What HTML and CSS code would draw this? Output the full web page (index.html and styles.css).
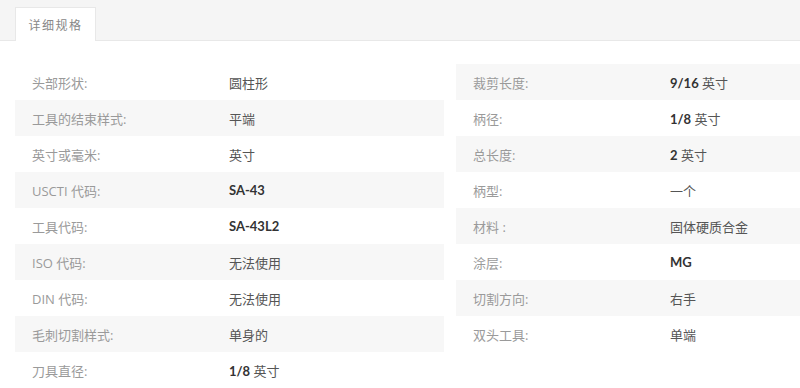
FILE: index.html
```html
<!DOCTYPE html>
<html lang="zh">
<head>
<meta charset="utf-8">
<link rel="stylesheet" href="styles.css">
</head>
<body>
<div class="tabs">
  <div class="tab">详细规格</div>
</div>
<div class="specs">
  <div class="col col-left">
    <div class="row"><span class="label">头部形状:</span><span class="value">圆柱形</span></div>
    <div class="row"><span class="label">工具的结束样式:</span><span class="value">平端</span></div>
    <div class="row"><span class="label">英寸或毫米:</span><span class="value">英寸</span></div>
    <div class="row"><span class="label">USCTI 代码:</span><span class="value"><b class="num">SA-43</b></span></div>
    <div class="row"><span class="label">工具代码:</span><span class="value"><b class="num">SA-43L2</b></span></div>
    <div class="row"><span class="label">ISO 代码:</span><span class="value">无法使用</span></div>
    <div class="row"><span class="label">DIN 代码:</span><span class="value">无法使用</span></div>
    <div class="row"><span class="label">毛刺切割样式:</span><span class="value">单身的</span></div>
    <div class="row"><span class="label">刀具直径:</span><span class="value"><b class="num">1/8</b> 英寸</span></div>
  </div>
  <div class="col col-right">
    <div class="row"><span class="label">裁剪长度:</span><span class="value"><b class="num">9/16</b> 英寸</span></div>
    <div class="row"><span class="label">柄径:</span><span class="value"><b class="num">1/8</b> 英寸</span></div>
    <div class="row"><span class="label">总长度:</span><span class="value"><b class="num">2</b> 英寸</span></div>
    <div class="row"><span class="label">柄型:</span><span class="value">一个</span></div>
    <div class="row"><span class="label">材料 :</span><span class="value">固体硬质合金</span></div>
    <div class="row"><span class="label">涂层:</span><span class="value"><b class="num">MG</b></span></div>
    <div class="row"><span class="label">切割方向:</span><span class="value">右手</span></div>
    <div class="row"><span class="label">双头工具:</span><span class="value">单端</span></div>
  </div>
</div>
</body>
</html>
```
FILE: styles.css
```css
html, body {
  margin: 0;
  padding: 0;
  background: #fff;
  font-family: "Open Sans", "Noto Sans CJK SC", sans-serif;
  font-size: 13px;
}
.tabs {
  display: flex;
  height: 33px;
  padding: 7px 15px 0;
  background: #f5f5f5;
  border-bottom: 1px solid #e8e8e8;
}
.tab {
  width: 79px;
  height: 33px;
  margin-bottom: -1px;
  background: #fff;
  border: 1px solid #e8e8e8;
  border-bottom: none;
  display: flex;
  align-items: center;
  justify-content: center;
  color: #888;
  font-size: 12px;
  letter-spacing: 1.5px;
}
.specs {
  display: grid;
  grid-template-columns: 429px 1fr;
  column-gap: 12px;
  padding: 23px 0 0 15px;
}
.row {
  display: flex;
  align-items: center;
  height: 36px;
  padding-left: 17px;
}
.col-left .row:nth-child(even),
.col-right .row:nth-child(odd) {
  background: #f7f7f7;
}
.label {
  width: 197px;
  flex: none;
  color: #9a9a9a;
}
.value {
  color: #555;
}
.num {
  font-family: "Lato", sans-serif;
  font-weight: 700;
  color: #333;
}
```
